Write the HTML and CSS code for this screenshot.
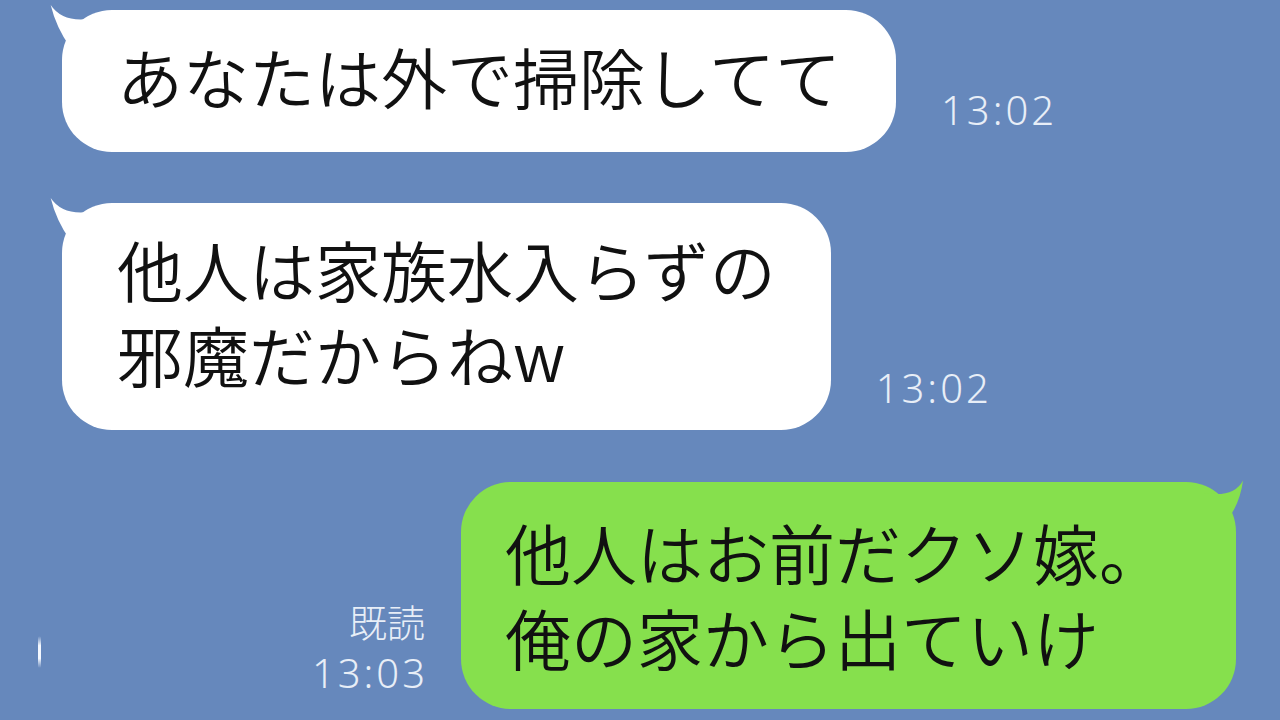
FILE: index.html
```html
<!DOCTYPE html>
<html lang="ja">
<head>
<meta charset="utf-8">
<title>トーク</title>
<link rel="stylesheet" href="styles.css">
</head>
<body>
<main class="chat">
  <div class="row row-in first">
    <div class="bubble bubble-in">
      <svg class="tail tail-in" viewBox="0 0 60 60" aria-hidden="true"><path d="M2.7,3 Q14,20 40,17 L45,45 L22,45 Q8,25 2.7,3 Z"/></svg>
      <p class="msg">あなたは外で掃除してて</p>
    </div>
    <div class="meta meta-in"><span class="time">13:02</span></div>
  </div>

  <div class="row row-in second">
    <div class="bubble bubble-in">
      <svg class="tail tail-in" viewBox="0 0 60 60" aria-hidden="true"><path d="M2.7,3 Q14,20 40,17 L45,45 L22,45 Q8,25 2.7,3 Z"/></svg>
      <p class="msg"><span class="line">他人は家族水入らずの</span><span class="line">邪魔だからねw</span></p>
    </div>
    <div class="meta meta-in"><span class="time">13:02</span></div>
  </div>

  <div class="row row-out">
    <div class="meta meta-out">
      <span class="read">既読</span>
      <span class="time">13:03</span>
    </div>
    <div class="bubble bubble-out">
      <svg class="tail tail-out" viewBox="0 0 60 60" aria-hidden="true"><path d="M53,6.5 Q44,24 14,19 L14,48 L36,48 Q50,30 53,6.5 Z"/></svg>
      <p class="msg"><span class="line">他人はお前だクソ嫁。</span><span class="line">俺の家から出ていけ</span></p>
    </div>
  </div>
</main>
<div class="glint"></div>
</body>
</html>
```
FILE: styles.css
```css
html, body {
  margin: 0;
  padding: 0;
}

body {
  width: 1280px;
  height: 720px;
  overflow: hidden;
  background: #6688bc;
  font-family: "Noto Sans CJK JP", "Noto Sans", sans-serif;
  position: relative;
}

.chat {
  display: flex;
  flex-direction: column;
  padding-top: 10px;
}

.row {
  display: flex;
  align-items: flex-end;
}

.row-in {
  padding-left: 62px;
  gap: 45px;
}

.row-in.second {
  margin-top: 51px;
}

.row-out {
  justify-content: flex-end;
  padding-right: 44px;
  margin-top: 52px;
  gap: 36px;
}

.bubble {
  position: relative;
  border-radius: 50px;
}

.bubble-in {
  background: #ffffff;
  padding: 23px 55px 34px;
}

.bubble-out {
  background: #86e04d;
  padding: 27px 71px 30px 44px;
}

.tail {
  position: absolute;
  top: -8px;
  width: 60px;
  height: 60px;
}

.tail-in {
  left: -14px;
  fill: #ffffff;
}

.tail-out {
  right: -14px;
  fill: #86e04d;
}

.msg {
  position: relative;
  margin: 0;
  display: flex;
  flex-direction: column;
  font-size: 66px;
  font-weight: 350;
  line-height: 85px;
  color: #111111;
  white-space: nowrap;
}

.line {
  display: block;
  height: 85px;
}

.meta {
  display: flex;
  flex-direction: column;
  color: #e8eef7;
  font-weight: 300;
  line-height: 1;
}

.meta-in {
  padding-bottom: 22px;
}

.meta-out {
  align-items: flex-end;
  padding-bottom: 16px;
  gap: 13px;
}

.time {
  font-family: "Noto Sans", "Noto Sans CJK JP", sans-serif;
  font-size: 40px;
  letter-spacing: 3px;
  margin-right: -3px;
}

.read {
  font-size: 38px;
}

.glint {
  position: absolute;
  left: 38px;
  top: 636px;
  width: 3px;
  height: 32px;
  border-radius: 2px;
  background: linear-gradient(#6688bc, #f4f8ff 30%, #f4f8ff 70%, #6688bc);
}
```
